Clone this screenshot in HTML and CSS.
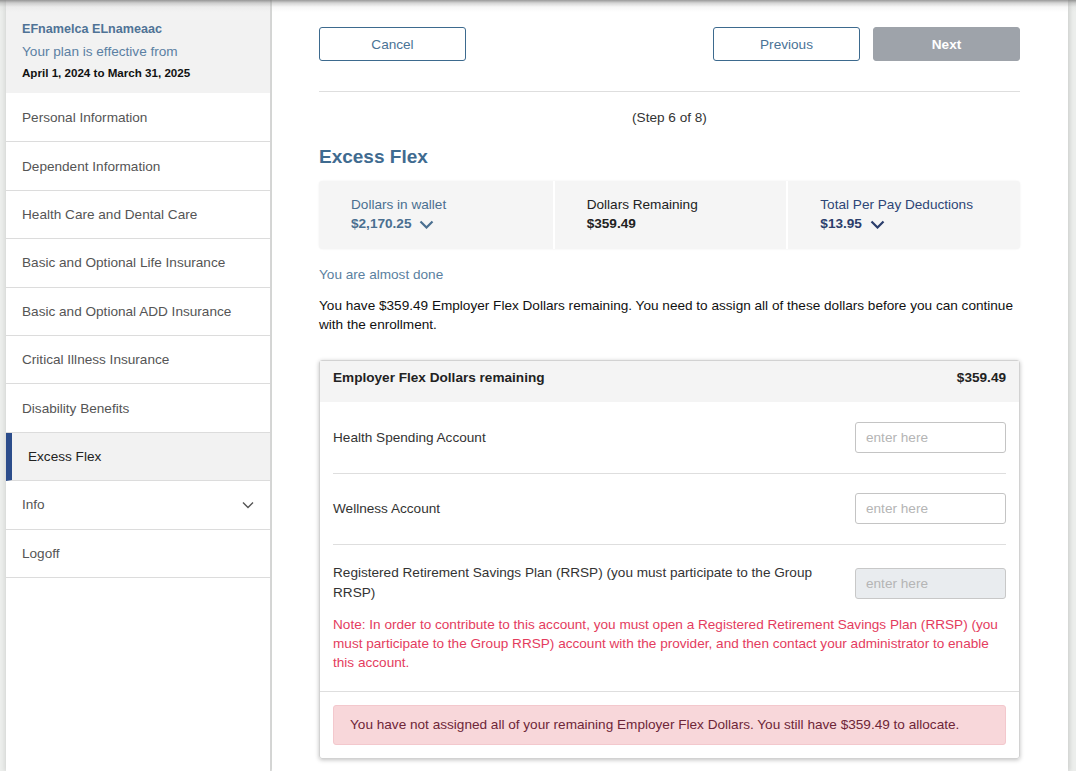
FILE: index.html
```html
<!DOCTYPE html>
<html lang="en">
<head>
<meta charset="utf-8">
<title>Excess Flex</title>
<link rel="stylesheet" href="styles.css">
</head>
<body>
<div class="app">
  <aside class="sidebar">
    <div class="side-head">
      <div class="side-name">EFnamelca ELnameaac</div>
      <div class="side-plan">Your plan is effective from</div>
      <div class="side-date">April 1, 2024 to March 31, 2025</div>
    </div>
    <nav class="side-nav">
      <a class="nav-item">Personal Information</a>
      <a class="nav-item">Dependent Information</a>
      <a class="nav-item">Health Care and Dental Care</a>
      <a class="nav-item">Basic and Optional Life Insurance</a>
      <a class="nav-item">Basic and Optional ADD Insurance</a>
      <a class="nav-item">Critical Illness Insurance</a>
      <a class="nav-item">Disability Benefits</a>
      <a class="nav-item active">Excess Flex</a>
      <a class="nav-item">Info
        <svg class="nav-chev" width="12" height="8" viewBox="0 0 12 8"><path d="M1 1.5 6 6.5 11 1.5" fill="none" stroke="#555" stroke-width="1.4"/></svg>
      </a>
      <a class="nav-item">Logoff</a>
    </nav>
  </aside>
  <main class="main">
    <div class="btn-row">
      <button class="btn btn-outline">Cancel</button>
      <div class="btn-group">
        <button class="btn btn-outline">Previous</button>
        <button class="btn btn-disabled">Next</button>
      </div>
    </div>
    <hr class="divider">
    <div class="step">(Step 6 of 8)</div>
    <h1 class="title">Excess Flex</h1>
    <div class="summary">
      <div class="sum-col">
        <div class="sum-label blue">Dollars in wallet</div>
        <div class="sum-value blue">$2,170.25
          <svg class="chev" width="15" height="9" viewBox="0 0 15 9"><path d="M1.5 1.5 7.5 7.5 13.5 1.5" fill="none" stroke="currentColor" stroke-width="2.2"/></svg>
        </div>
      </div>
      <div class="sum-col">
        <div class="sum-label dark">Dollars Remaining</div>
        <div class="sum-value dark">$359.49</div>
      </div>
      <div class="sum-col">
        <div class="sum-label navy">Total Per Pay Deductions</div>
        <div class="sum-value navy">$13.95
          <svg class="chev" width="15" height="9" viewBox="0 0 15 9"><path d="M1.5 1.5 7.5 7.5 13.5 1.5" fill="none" stroke="currentColor" stroke-width="2.2"/></svg>
        </div>
      </div>
    </div>
    <p class="almost">You are almost done</p>
    <p class="intro">You have $359.49 Employer Flex Dollars remaining. You need to assign all of these dollars before you can continue with the enrollment.</p>
    <section class="card">
      <div class="card-head">
        <span>Employer Flex Dollars remaining</span>
        <span>$359.49</span>
      </div>
      <div class="card-body">
        <div class="acct acct-1">
          <div class="acct-label">Health Spending Account</div>
          <input class="acct-input" type="text" placeholder="enter here">
        </div>
        <div class="acct acct-2">
          <div class="acct-label">Wellness Account</div>
          <input class="acct-input" type="text" placeholder="enter here">
        </div>
        <div class="acct acct-3">
          <div class="acct-row">
            <div class="acct-label wide">Registered Retirement Savings Plan (RRSP) (you must participate to the Group RRSP)</div>
            <input class="acct-input" type="text" placeholder="enter here" disabled>
          </div>
          <p class="note">Note: In order to contribute to this account, you must open a Registered Retirement Savings Plan (RRSP) (you must participate to the Group RRSP) account with the provider, and then contact your administrator to enable this account.</p>
        </div>
      </div>
      <div class="card-foot">
        <div class="alert">You have not assigned all of your remaining Employer Flex Dollars. You still have $359.49 to allocate.</div>
      </div>
    </section>
  </main>
</div>
</body>
</html>
```
FILE: styles.css
```css
* { box-sizing: border-box; }
html, body { margin: 0; padding: 0; }
body {
  font-family: "Liberation Sans", Arial, sans-serif;
  font-size: 13.6px;
  color: #222;
  background: #eceeec;
  height: 771px;
  overflow: hidden;
}
.app {
  position: relative;
  display: flex;
  height: 771px;
  padding-left: 6px;
  padding-right: 8px;
}
.app::before {
  content: "";
  position: absolute;
  left: 0; right: 0; top: 0;
  height: 12px;
  background: linear-gradient(to bottom, rgba(110,110,110,.7) 0, rgba(150,150,150,.4) 3px, rgba(200,200,200,.14) 7px, rgba(255,255,255,0) 12px);
  pointer-events: none;
  z-index: 5;
}
.sidebar {
  width: 265px;
  flex: 0 0 265px;
  background: #fff;
  border-right: 1px solid #d6d6d6;
  box-shadow: 1px 0 2px rgba(0,0,0,.12), -2px 0 4px rgba(0,0,0,.08);
}
.side-head {
  background: #f2f2f2;
  padding: 19px 16px 9px 16px;
  height: 93px;
}
.side-name {
  font-size: 12.6px;
  font-weight: bold;
  color: #4f7396;
  line-height: 20px;
}
.side-plan {
  color: #5b80a3;
  line-height: 22px;
  margin-top: 2px;
}
.side-date {
  font-size: 11.6px;
  font-weight: bold;
  color: #111;
  line-height: 20px;
  margin-top: 0;
}
.side-nav { padding-top: 1px; }
.nav-item {
  display: flex;
  align-items: center;
  justify-content: space-between;
  height: 48.4px;
  padding: 0 16px 0 16px;
  border-bottom: 1px solid #dcdcdc;
  color: #555;
  text-decoration: none;
}
.nav-item.active {
  background: #f2f2f2;
  border-left: 6px solid #2c4d8b;
  padding-left: 16px;
  color: #222;
}
.main {
  flex: 1;
  background: #fff;
  padding: 27px 48px 0 47px;
  margin-left: 1px;
  box-shadow: 2px 0 4px rgba(0,0,0,.12);
}
.btn-row {
  display: flex;
  justify-content: space-between;
}
.btn-group { display: flex; gap: 13px; }
.btn {
  width: 147px;
  height: 34px;
  font-family: inherit;
  font-size: 13.6px;
  border-radius: 3px;
  cursor: pointer;
}
.btn-outline {
  background: #fff;
  border: 1px solid #3d6a8e;
  color: #4a7396;
}
.btn-disabled {
  background: #9ea3aa;
  border: 1px solid #9ea3aa;
  color: #fff;
  font-weight: bold;
}
.divider {
  border: 0;
  border-top: 1px solid #dedede;
  margin: 30px 0 0 0;
}
.step {
  text-align: center;
  line-height: 20px;
  margin-top: 16px;
  color: #333;
}
.title {
  font-size: 19px;
  font-weight: 600;
  color: #3f6b90;
  line-height: 24px;
  margin: 17px 0 0 0;
}
.summary {
  display: grid;
  grid-template-columns: 1fr 1fr 1fr;
  margin-top: 12px;
  background: #f5f5f5;
  border-radius: 4px;
  box-shadow: 0 0 2px rgba(0,0,0,.08);
}
.sum-col {
  padding: 15px 32px 15px 32px;
  border-left: 2px solid #fff;
}
.sum-col:first-child { border-left: 0; }
.sum-label { line-height: 18px; }
.sum-value {
  font-weight: bold;
  line-height: 20px;
  display: flex;
  align-items: center;
  gap: 8px;
}
.blue { color: #4a6f90; }
.dark { color: #222; }
.navy { color: #2e4676; }
.sum-value.blue { color: #4a6f90; }
.sum-value.navy { color: #2b3e6c; }
.chev { display: block; margin-top: 1px; }
.almost {
  margin: 16px 0 0 0;
  line-height: 20px;
  color: #5a7fa0;
}
.intro {
  margin: 11px 0 0 0;
  line-height: 19px;
  color: #111;
}
.card {
  margin-top: 26px;
  border: 1px solid #d2d2d2;
  border-radius: 3px;
  box-shadow: 0 1px 4px rgba(0,0,0,.25);
}
.card-head {
  display: flex;
  justify-content: space-between;
  background: #f4f4f4;
  padding: 8px 13px 15px 13px;
  line-height: 18px;
  font-weight: bold;
  color: #222;
}
.card-body { padding: 0 13px; }
.acct {
  border-bottom: 1px solid #dedede;
}
.acct-1, .acct-2 {
  display: flex;
  justify-content: space-between;
  align-items: center;
}
.acct-1 { padding: 20px 0 20px 0; }
.acct-2 { padding: 19px 0 20px 0; }
.acct-3 { border-bottom: 0; padding: 18px 0 19px 0; }
.acct-row {
  display: flex;
  justify-content: space-between;
  align-items: center;
}
.acct-label { color: #333; line-height: 20px; }
.acct-label.wide { width: 485px; }
.acct-input {
  width: 151px;
  height: 31px;
  border: 1px solid #c4c4c4;
  border-radius: 3px;
  padding: 0 10px;
  font-family: inherit;
  font-size: 13.6px;
  background: #fff;
}
.acct-input::placeholder { color: #b5b5b5; }
.acct-input:disabled { background: #e9ecef; border-color: #c8c8c8; }
.note {
  margin: 12px 0 0 0;
  color: #e43c5e;
  line-height: 19px;
}
.card-foot {
  border-top: 1px solid #dedede;
  padding: 13px 13px 13px 13px;
}
.alert {
  background: #f8d7da;
  border: 1px solid #f3c8cd;
  border-radius: 3px;
  color: #6e2638;
  line-height: 20px;
  padding: 9px 16px;
}
```
